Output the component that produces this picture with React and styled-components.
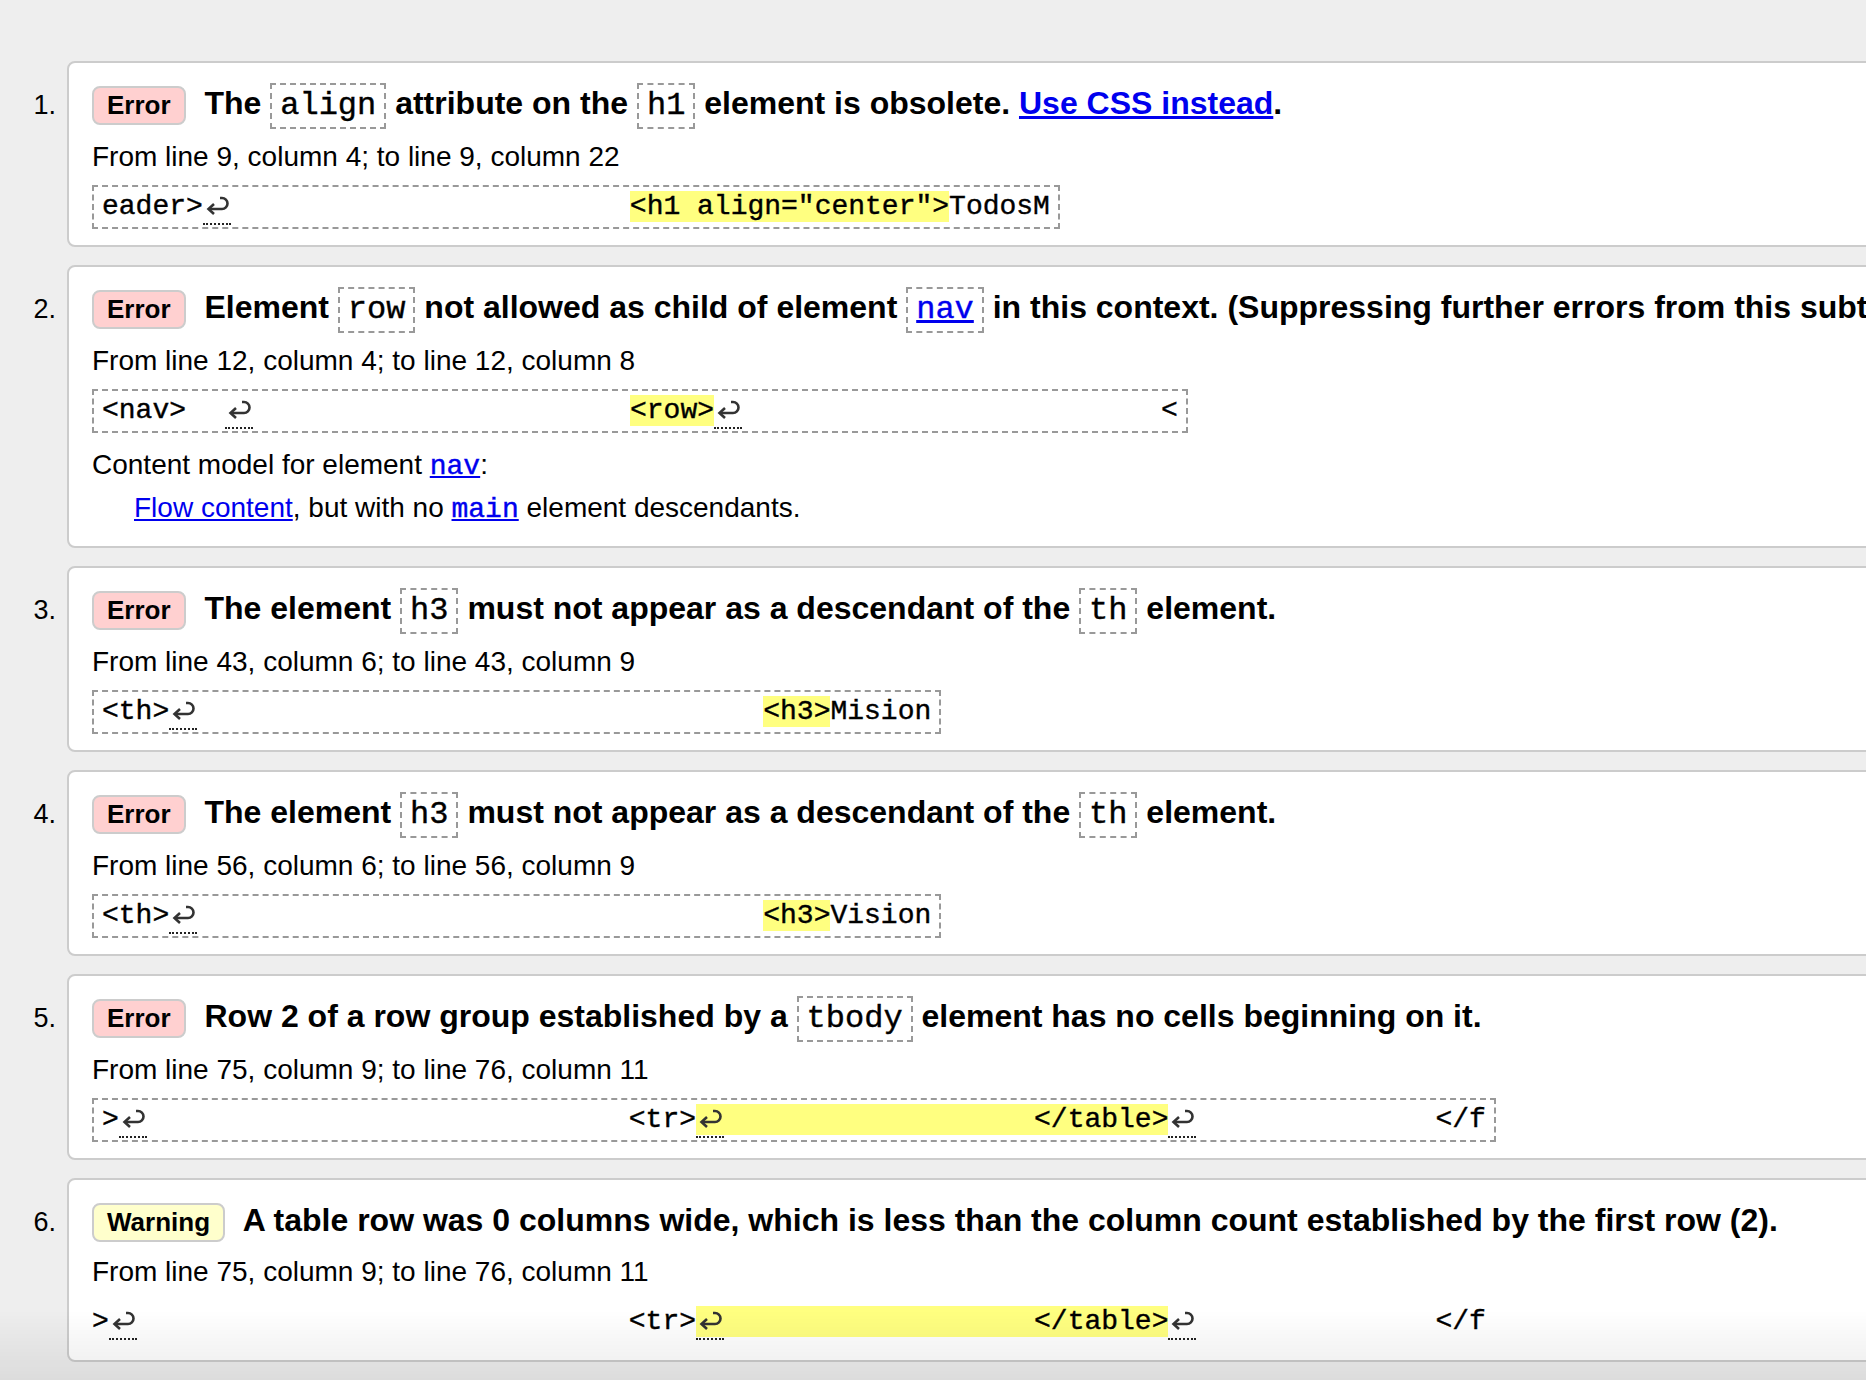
import React from 'react';
import styled, { createGlobalStyle } from 'styled-components';

const GlobalStyle = createGlobalStyle`
  html, body {
    margin: 0;
    padding: 0;
    background: #eee;
    overflow: hidden;
  }
  body {
    font-family: "Liberation Sans", Arial, Helvetica, sans-serif;
    color: #000;
  }
`;

const Page = styled.div`
  padding: 61px 0 40px;
`;

const Results = styled.ol`
  list-style: none;
  margin: 0;
  padding: 0;
  display: flex;
  flex-direction: column;
  gap: 18px;
`;

const Result = styled.li`
  display: flex;
  align-items: baseline;
`;

const Num = styled.span`
  flex: 0 0 56px;
  margin-right: 11px;
  text-align: right;
  font-size: 27px;
`;

const Card = styled.div`
  flex: 0 0 2400px;
  box-sizing: border-box;
  background: #fff;
  border: 2px solid #ccc;
  border-radius: 8px;
  padding: 16px 20px 16px 23px;
`;

const Message = styled.p`
  margin: 0;
  font-size: 32px;
  font-weight: bold;
  line-height: 48px;
  white-space: nowrap;
`;

const Badge = styled.strong`
  display: inline-block;
  margin-right: 10px;
  padding: 3px 13px;
  font-size: 26px;
  line-height: 29px;
  border: 2px solid #ccc;
  border-radius: 8px;
  background: ${p => (p.warning ? '#ffffcc' : '#ffd0d0')};
`;

const Code = styled.code`
  display: inline-block;
  padding: 3px 8px;
  font-family: "Liberation Mono", "Courier New", monospace;
  font-weight: normal;
  font-size: 32px;
  line-height: 36px;
  border: 2px dashed #999;
  -webkit-text-stroke: 0.4px currentColor;
`;

const Link = styled.a`
  color: #0000ee;
  text-decoration: underline;
  font-family: ${p => (p.mono ? '"Liberation Mono", "Courier New", monospace' : 'inherit')};
  -webkit-text-stroke: ${p => (p.mono ? '0.4px currentColor' : '0')};
`;

const Location = styled.p`
  margin: 8px 0 0;
  font-size: 28px;
  line-height: 40px;
`;

const Extract = styled.pre`
  display: table;
  margin: 8px 0 0;
  padding: ${p => (p.bare ? '6px 0 4px' : '4px 8px 2px')};
  font-family: "Liberation Mono", "Courier New", monospace;
  font-size: 28px;
  line-height: 32px;
  border: ${p => (p.bare ? 'none' : '2px dashed #999')};
  white-space: pre;
  -webkit-text-stroke: 0.4px currentColor;
`;

const Mark = styled.mark`
  background: #ffff80;
  color: inherit;
`;

const Lf = styled.span`
  display: inline-block;
  width: 28px;
  height: 32px;
  vertical-align: top;
  border-bottom: 2px dotted #222;
  color: #333;

  svg {
    display: block;
    margin: 4px 0 0 2px;
  }
`;

const Gap = styled.span`
  display: inline-block;
  width: ${p => p.w}px;
`;

const Model = styled.p`
  margin: ${p => (p.indent ? '1px 0 0 42px' : '12px 0 0')};
  font-size: 28px;
  line-height: 40px;
`;

const BottomFade = styled.div`
  position: fixed;
  left: 0;
  right: 0;
  bottom: 0;
  height: 70px;
  background: linear-gradient(rgba(0, 0, 0, 0), rgba(0, 0, 0, 0.075));
  pointer-events: none;
`;

const lf = (
  <Lf title="Line break">
    <svg width="25" height="20" viewBox="0 0 25 20" fill="none" stroke="#333" strokeWidth="2.6">
      <path d="M4 14 H17 A5.5 5.5 0 0 0 17 3 H15" />
      <path d="M9 9 L3.5 14 L9 19" strokeLinejoin="miter" />
    </svg>
  </Lf>
);

const results = [
  {
    msg: (
      <>
        The <Code>align</Code> attribute on the <Code>h1</Code> element is obsolete.{' '}
        <Link href="#">Use CSS instead</Link>.
      </>
    ),
    loc: 'From line 9, column 4; to line 9, column 22',
    extract: (
      <>
        eader&gt;{lf}<Gap w={399} />
        <Mark>&lt;h1 align="center"&gt;</Mark>TodosM
      </>
    ),
  },
  {
    msg: (
      <>
        Element <Code>row</Code> not allowed as child of element{' '}
        <Code><Link href="#" mono="1">nav</Link></Code> in this context. (Suppressing further errors from this subtree.)
      </>
    ),
    loc: 'From line 12, column 4; to line 12, column 8',
    extract: (
      <>
        &lt;nav&gt;<Gap w={39} />{lf}<Gap w={377} />
        <Mark>&lt;row&gt;</Mark>{lf}<Gap w={419} />&lt;
      </>
    ),
    model: true,
  },
  {
    msg: (
      <>
        The element <Code>h3</Code> must not appear as a descendant of the <Code>th</Code> element.
      </>
    ),
    loc: 'From line 43, column 6; to line 43, column 9',
    extract: (
      <>
        &lt;th&gt;{lf}<Gap w={566} />
        <Mark>&lt;h3&gt;</Mark>Mision
      </>
    ),
  },
  {
    msg: (
      <>
        The element <Code>h3</Code> must not appear as a descendant of the <Code>th</Code> element.
      </>
    ),
    loc: 'From line 56, column 6; to line 56, column 9',
    extract: (
      <>
        &lt;th&gt;{lf}<Gap w={566} />
        <Mark>&lt;h3&gt;</Mark>Vision
      </>
    ),
  },
  {
    msg: (
      <>
        Row 2 of a row group established by a <Code>tbody</Code> element has no cells beginning on it.
      </>
    ),
    loc: 'From line 75, column 9; to line 76, column 11',
    extract: (
      <>
        &gt;{lf}<Gap w={482} />&lt;tr&gt;
        <Mark>{lf}<Gap w={310} />&lt;/table&gt;</Mark>{lf}<Gap w={239} />&lt;/f
      </>
    ),
  },
  {
    warning: true,
    msg: (
      <>
        A table row was 0 columns wide, which is less than the column count established by the first row (2).
      </>
    ),
    loc: 'From line 75, column 9; to line 76, column 11',
    bare: true,
    extract: (
      <>
        &gt;{lf}<Gap w={492} />&lt;tr&gt;
        <Mark>{lf}<Gap w={310} />&lt;/table&gt;</Mark>{lf}<Gap w={239} />&lt;/f
      </>
    ),
  },
];

export default function App() {
  return (
    <Page>
      <GlobalStyle />
      <Results>
        {results.map((r, i) => (
          <Result key={i}>
            <Num>{i + 1}.</Num>
            <Card>
              <Message>
                <Badge warning={r.warning ? 1 : 0}>{r.warning ? 'Warning' : 'Error'}</Badge> {r.msg}
              </Message>
              <Location>{r.loc}</Location>
              <Extract bare={r.bare ? 1 : 0}>{r.extract}</Extract>
              {r.model && (
                <>
                  <Model>
                    Content model for element <Link href="#" mono="1">nav</Link>:
                  </Model>
                  <Model indent={1}>
                    <Link href="#">Flow content</Link>, but with no <Link href="#" mono="1">main</Link> element descendants.
                  </Model>
                </>
              )}
            </Card>
          </Result>
        ))}
      </Results>
      <BottomFade />
    </Page>
  );
}
